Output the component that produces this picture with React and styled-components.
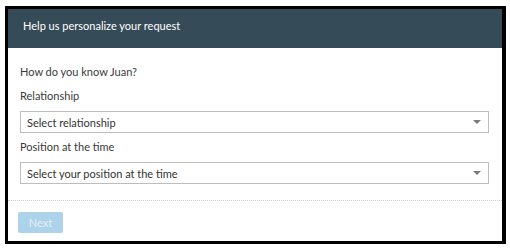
import React from "react"
import styled, { createGlobalStyle } from "styled-components"

const GlobalStyle = createGlobalStyle`
  body {
    margin: 0;
    background: #fff;
    font-family: "Lato", "Open Sans", sans-serif;
  }
`

const Frame = styled.div`
  margin: 6px 0 0 5px;
  width: 494px;
  height: 232px;
  border: 3px solid #000;
  border-right-width: 4px;
  background: #fff;
  display: flex;
  flex-direction: column;
`

const Header = styled.div`
  height: 39px;
  box-sizing: border-box;
  padding: 9px 15px 0;
  background: #364b58;
  color: #fff;
  font-size: 11px;
  line-height: 15px;
`

const Body = styled.div`
  padding: 16px 12px 0;
  display: flex;
  flex-direction: column;
`

const Question = styled.div`
  font-size: 11px;
  line-height: 16px;
  color: #3a3a3a;
  margin-bottom: 8px;
`

const Label = styled.div`
  font-size: 11px;
  line-height: 16px;
  color: #3a3a3a;
  margin-bottom: ${p => p.gap || 6}px;
`

const Select = styled.div`
  box-sizing: border-box;
  height: 22px;
  width: 469px;
  margin-top: 1px;
  border: 1px solid #bdbdbd;
  display: flex;
  align-items: center;
  justify-content: space-between;
  padding: 0 7px 0 6px;
  font-size: 11px;
  color: #333;
  margin-bottom: ${p => p.gap || 0}px;
`

const Arrow = styled.span`
  width: 0;
  height: 0;
  border-left: 4px solid transparent;
  border-right: 4px solid transparent;
  border-top: 4px solid #7a7a7a;
`

const Footer = styled.div`
  margin-top: auto;
  border-top: 1px dotted #cfcfcf;
  height: 41px;
  box-sizing: border-box;
  padding: 10px 10px 0;
`

const NextButton = styled.button`
  width: 45px;
  height: 21px;
  border: none;
  border-radius: 2px;
  background: #acd3ea;
  color: #e4f0f7;
  font-family: inherit;
  font-size: 11px;
  padding: 0;
`

const SelectField = ({ text, gap }) => (
  <Select gap={gap}>
    <span>{text}</span>
    <Arrow />
  </Select>
)

export default function App() {
  return (
    <>
      <GlobalStyle />
      <Frame>
        <Header>Help us personalize your request</Header>
        <Body>
          <Question>How do you know Juan?</Question>
          <Label>Relationship</Label>
          <SelectField text="Select relationship" gap={6} />
          <Label gap={6}>Position at the time</Label>
          <SelectField text="Select your position at the time" />
        </Body>
        <Footer>
          <NextButton disabled>Next</NextButton>
        </Footer>
      </Frame>
    </>
  )
}
